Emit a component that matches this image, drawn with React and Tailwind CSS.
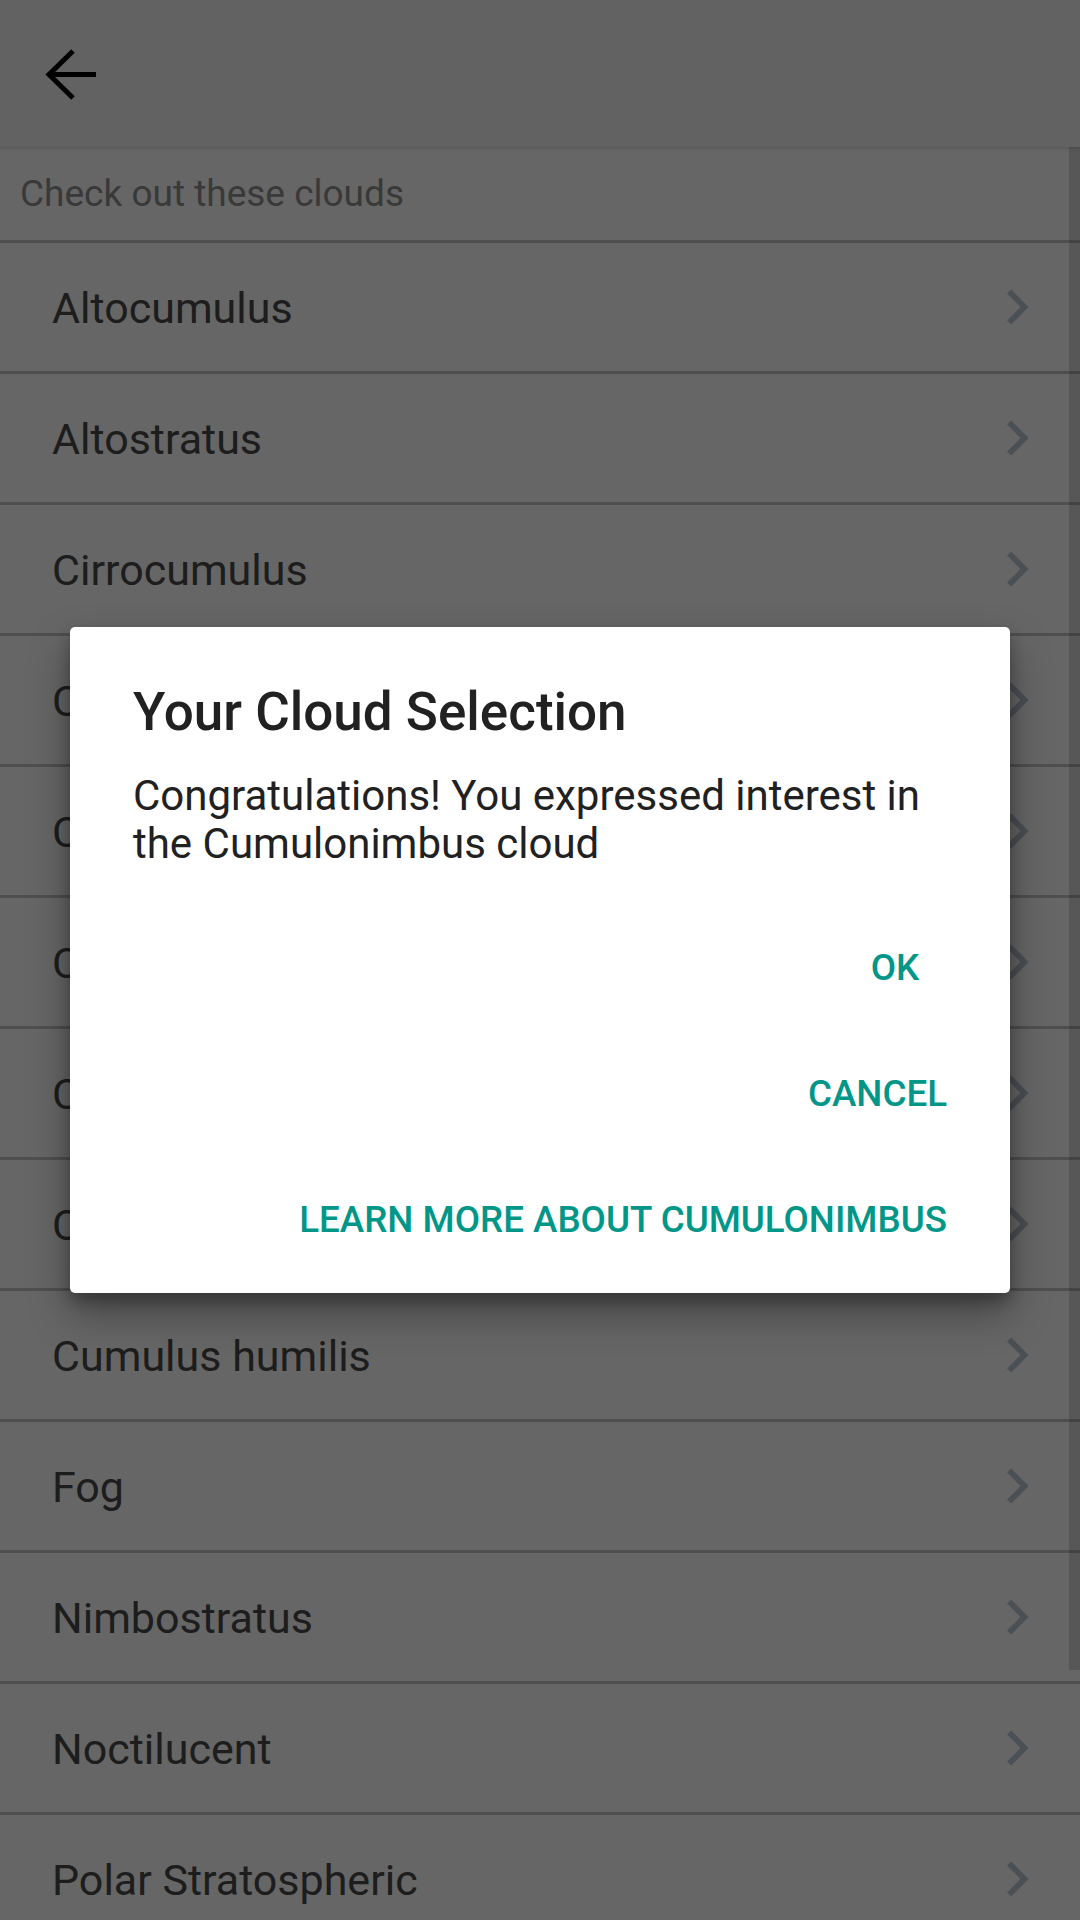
import React from "react";

const clouds = [
  "Altocumulus",
  "Altostratus",
  "Cirrocumulus",
  "Cirrostratus",
  "Cirrus",
  "Contrail",
  "Cumulonimbus",
  "Cumulus congestus",
  "Cumulus humilis",
  "Fog",
  "Nimbostratus",
  "Noctilucent",
  "Polar Stratospheric",
];

function Chevron() {
  return (
    <svg width="70" height="70" viewBox="0 0 24 24" className="shrink-0">
      <path d="M10 6L8.59 7.41 13.17 12l-4.58 4.59L10 18l6-6z" fill="#bbc8d4" />
    </svg>
  );
}

export default function App() {
  return (
    <div className="relative w-[1080px] h-[1920px] overflow-hidden bg-white font-['Roboto','Liberation_Sans',sans-serif]">
      {/* App bar */}
      <div className="relative z-10 h-[147px] bg-[#f5f5f5] flex items-center pl-[44px] shadow-[0_2px_3px_rgba(0,0,0,0.12)]">
        <svg width="56" height="56" viewBox="0 0 56 56">
          <path d="M4 28.5H52" stroke="#000" strokeWidth="5" fill="none" />
          <path d="M29 5L5 28.5L29 52" stroke="#000" strokeWidth="5" fill="none" strokeLinecap="butt" strokeLinejoin="miter" />
        </svg>
      </div>

      {/* Subheader */}
      <div className="h-[96px] flex items-center pl-[20px] border-b-[3px] border-[#c6c6c6] bg-white">
        <span className="text-[37px] text-[#8f8f8f] leading-none">Check out these clouds</span>
      </div>

      {/* List */}
      <div className="flex flex-col">
        {clouds.map((c) => (
          <div
            key={c}
            className="h-[131px] shrink-0 flex items-center justify-between pl-[52px] pr-[28px] border-b-[3px] border-[#c6c6c6] bg-white"
          >
            <span className="text-[43px] text-[#4a4a4a] pt-[3px]">{c}</span>
            <Chevron />
          </div>
        ))}
      </div>

      {/* Scrollbar */}
      <div className="absolute right-0 top-[147px] w-[11px] h-[1523px] bg-black/15" />

      {/* Scrim */}
      <div className="absolute inset-0 z-20 bg-black/60" />

      {/* Dialog */}
      <div className="absolute z-30 left-[70px] top-[627px] w-[940px] bg-white rounded-[5px] shadow-[0_20px_40px_rgba(0,0,0,0.35),0_8px_14px_rgba(0,0,0,0.25)] flex flex-col">
        <div className="pt-[54px] px-[63px]">
          <div className="text-[53px] leading-[62px] font-medium text-[#212121]">
            Your Cloud Selection
          </div>
          <div className="mt-[29px] text-[42px] leading-[48px] text-[#212121]">
            Congratulations! You expressed interest in the Cumulonimbus cloud
          </div>
        </div>
        <div className="mt-[37px] pb-[10px] pr-[31px] flex flex-col items-end">
          {["OK", "CANCEL", "LEARN MORE ABOUT CUMULONIMBUS"].map((b) => (
            <div
              key={b}
              className="h-[126px] min-w-[168px] px-[32px] flex items-center justify-center text-[36.75px] font-medium text-[#009688] uppercase"
            >
              {b}
            </div>
          ))}
        </div>
      </div>
    </div>
  );
}
